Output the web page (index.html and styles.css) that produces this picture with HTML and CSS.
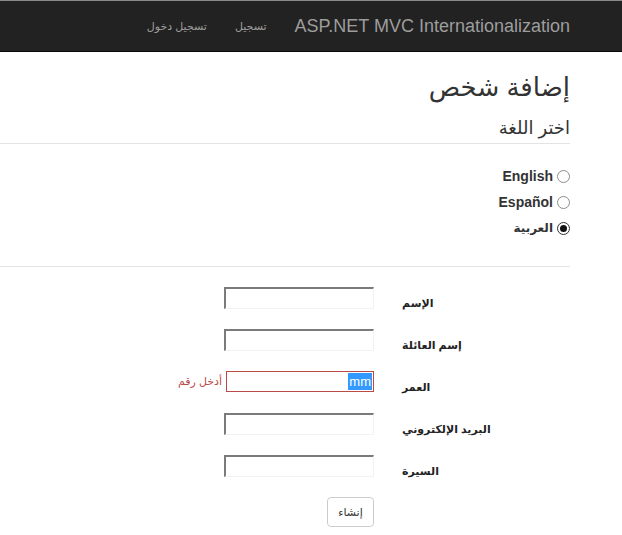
FILE: index.html
```html
<!DOCTYPE html>
<html dir="rtl" lang="ar">
<head>
<meta charset="utf-8">
<title>إضافة شخص</title>
<link rel="stylesheet" href="styles.css">
</head>
<body>
<header class="navbar">
  <a class="brand" href="#">ASP.NET MVC Internationalization</a>
  <nav class="nav">
    <a href="#">تسجيل</a>
    <a href="#">تسجيل دخول</a>
  </nav>
</header>
<main class="container">
  <h2 class="title">إضافة شخص</h2>
  <h4 class="subtitle">اختر اللغة</h4>
  <hr class="rule">
  <div class="langs">
    <label class="radio"><span class="dot"></span><span class="lang">English</span></label>
    <label class="radio"><span class="dot"></span><span class="lang">Español</span></label>
    <label class="radio"><span class="dot checked"></span><span class="lang ar">العربية</span></label>
  </div>
  <hr class="rule">
  <form class="form">
    <div class="row"><label class="lbl">الإسم</label><span class="field"></span></div>
    <div class="row"><label class="lbl">إسم العائلة</label><span class="field"></span></div>
    <div class="row"><label class="lbl">العمر</label><span class="field invalid"><span class="sel">mm</span></span><span class="err">أدخل رقم</span></div>
    <div class="row"><label class="lbl">البريد الإلكتروني</label><span class="field"></span></div>
    <div class="row"><label class="lbl">السيرة</label><span class="field"></span></div>
    <div class="actions"><button type="button" class="btn">إنشاء</button></div>
  </form>
</main>
</body>
</html>
```
FILE: styles.css
```css
html, body {
  margin: 0;
  padding: 0;
  background: #fff;
}
body {
  font-family: "Liberation Sans", "DejaVu Sans", sans-serif;
  color: #333;
  font-size: 14px;
}
.navbar {
  display: flex;
  align-items: center;
  height: 50px;
  background: #222;
  border-top: 1px solid #8a8a8a;
  border-bottom: 1px solid #080808;
  padding-right: 52px;
}
.brand {
  color: #9d9d9d;
  font-size: 18px;
  text-decoration: none;
  margin-left: 14px;
}
.nav {
  display: flex;
}
.nav a {
  color: #9d9d9d;
  font-size: 11px;
  text-decoration: none;
  padding: 0 14px;
}
.container {
  padding-right: 52px;
  padding-left: 0;
}
.title {
  font-size: 26px;
  font-weight: normal;
  margin: 15px 0 0;
  line-height: 40px;
  color: #333;
}
.subtitle {
  font-size: 18px;
  font-weight: normal;
  margin: 9px 0 0;
  line-height: 24px;
}
.rule {
  border: 0;
  border-top: 1px solid #e4e4e4;
  margin: 3px 0 0;
}
.langs {
  display: flex;
  flex-direction: column;
  gap: 8px;
  padding: 23px 0 26px;
}
.radio {
  display: flex;
  align-items: center;
  height: 18px;
}
.dot {
  width: 11px;
  height: 11px;
  border: 1px solid #8c8c8c;
  border-radius: 50%;
  margin-left: 4px;
  display: flex;
  align-items: center;
  justify-content: center;
  box-sizing: content-box;
}
.dot.checked {
  border-color: #333;
}
.dot.checked::after {
  content: "";
  width: 7px;
  height: 7px;
  border-radius: 50%;
  background: #111;
}
.lang {
  font-weight: bold;
  font-size: 14px;
  color: #333;
}
.lang.ar {
  font-size: 12px;
}
.form {
  padding-top: 20px;
}
.row {
  display: flex;
  align-items: flex-start;
  height: 22px;
  margin-bottom: 20px;
}
.lbl {
  width: 168px;
  margin-left: 28px;
  text-align: left;
  font-weight: bold;
  font-size: 11px;
  padding-top: 7px;
  line-height: 18px;
  color: #222;
  white-space: nowrap;
}
.field {
  box-sizing: border-box;
  width: 150px;
  height: 22px;
  border-top: 2px solid #7b7b7b;
  border-right: 1px solid #f2f2f2;
  border-bottom: 1px solid #f2f2f2;
  border-left: 2px solid #7b7b7b;
  background: #fff;
}
.field.invalid {
  width: 148px;
  height: 21px;
  border: 1px solid #b94a48;
  display: flex;
  align-items: center;
  justify-content: flex-start;
  padding-right: 1px;
}
.sel {
  background: #3399ff;
  color: #fff;
  font-size: 13px;
  line-height: 17px;
  padding: 0 1px;
}
.err {
  color: #b94a48;
  font-size: 11px;
  margin-right: 4px;
  line-height: 21px;
}
.actions {
  padding-right: 196px;
}
.btn {
  width: 47px;
  height: 30px;
  background: #fff;
  border: 1px solid #ccc;
  border-radius: 4px;
  font-family: "Liberation Sans", "DejaVu Sans", sans-serif;
  font-size: 11px;
  color: #333;
  padding: 0;
}
```
